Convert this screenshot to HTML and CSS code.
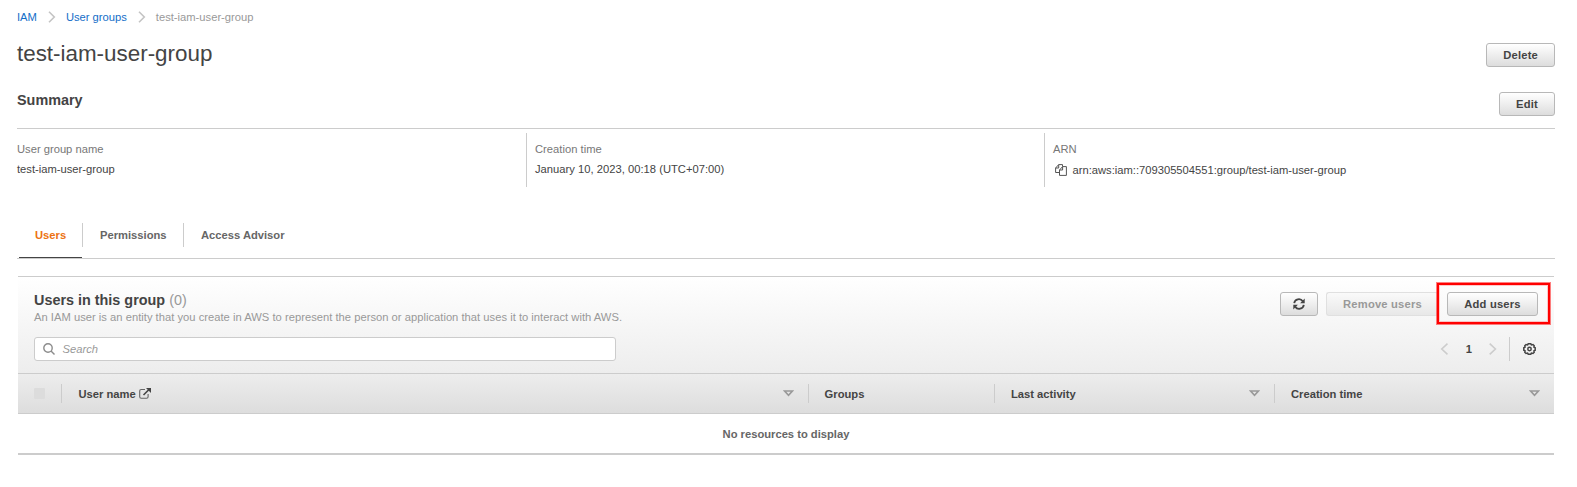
FILE: index.html
```html
<!DOCTYPE html>
<html lang="en">
<head>
<meta charset="utf-8">
<title>test-iam-user-group</title>
<link rel="stylesheet" href="styles.css">
</head>
<body>
<main class="page">
  <nav class="breadcrumbs">
    <a class="crumb crumb-first">IAM</a>
    <svg class="crumb-sep" width="8" height="12" viewBox="0 0 8 12"><path d="M1 .7 6.300 6 1 11.300"/></svg>
    <a class="crumb">User groups</a>
    <svg class="crumb-sep" width="8" height="12" viewBox="0 0 8 12"><path d="M1 .7 6.300 6 1 11.300"/></svg>
    <span class="crumb-current">test-iam-user-group</span>
  </nav>

  <header class="title-row">
    <h1 class="title">test-iam-user-group</h1>
    <button class="btn">Delete</button>
  </header>

  <section class="summary">
    <div class="summary-head">
      <h2 class="heading">Summary</h2>
      <button class="btn">Edit</button>
    </div>
    <div class="summary-grid">
      <div class="field"><div class="label">User group name</div><div class="value">test-iam-user-group</div></div>
      <div class="field"><div class="label">Creation time</div><div class="value">January 10, 2023, 00:18 (UTC+07:00)</div></div>
      <div class="field"><div class="label">ARN</div>
        <div class="value value-arn">
          <svg class="copy-icon" width="12" height="12" viewBox="0 0 12 12"><path d="M4 8.500H.6V4L3.700.6H7.500V2.500M3.700.6V4H.6M4.500 11.400V6L7.600 2.600H11.400V11.400ZM7.600 2.600V6H4.500"/></svg>
          <span>arn:aws:iam::709305504551:group/test-iam-user-group</span>
        </div>
      </div>
    </div>
  </section>

  <nav class="tabs">
    <a class="tab tab-active"><span class="tab-text">Users</span></a>
    <a class="tab"><span class="tab-text">Permissions</span></a>
    <a class="tab"><span class="tab-text">Access Advisor</span></a>
  </nav>

  <section class="panel">
    <div class="panel-head">
      <div class="panel-left">
        <h2 class="heading">Users in this group <span class="count">(0)</span></h2>
        <p class="desc">An IAM user is an entity that you create in AWS to represent the person or application that uses it to interact with AWS.</p>
        <div class="search">
          <svg width="12" height="12" viewBox="0 0 12 12"><circle cx="5" cy="5" r="4.200"/><path d="M8 8 11.500 11.500"/></svg>
          <span>Search</span>
        </div>
      </div>
      <div class="panel-right">
        <div class="actions">
          <button class="btn btn-refresh"><svg width="12" height="12" viewBox="0 0 12 12"><path d="M1.200 5.200A4.700 4.700 0 0 1 9.800 3.300M10.800 6.800A4.700 4.700 0 0 1 2.200 8.700"/><path class="solid" d="M11.700.6V5.200H7.100ZM.3 11.400V6.800H4.900Z"/></svg></button>
          <button class="btn btn-disabled">Remove users</button>
          <div class="highlight"><button class="btn">Add users</button></div>
        </div>
        <div class="pager">
          <svg class="arrow" width="8" height="12" viewBox="0 0 8 12"><path d="M7.500 .7 1.800 6 7.500 11.300"/></svg>
          <span class="page-number">1</span>
          <svg class="arrow" width="8" height="12" viewBox="0 0 8 12"><path d="M.7 .7 6.400 6 .7 11.300"/></svg>
          <span class="settings"><svg width="13" height="12" viewBox="0 0 13 12"><path d="M5.200.8H7.800L8.400 1.900 10 1.500 11.200 2.700 10.900 4.100 12.200 4.800V7.200L10.900 7.900 11.200 9.300 10 10.500 8.400 10.100 7.800 11.200H5.200L4.600 10.100 3 10.500 1.800 9.300 2.100 7.900 .8 7.200V4.800L2.100 4.100 1.800 2.700 3 1.500 4.600 1.900Z"/><circle cx="6.500" cy="6" r="1.700"/></svg></span>
        </div>
      </div>
    </div>

    <div class="thead">
      <div class="th th-check"><span class="checkbox"></span></div>
      <div class="th th-name">User name
        <svg class="external" width="12" height="11" viewBox="0 0 12 11"><path class="frame" d="M6 1.500H2.200Q.7 1.500.7 3V8.800Q.7 10.300 2.200 10.300H7.600Q9.100 10.300 9.100 8.800V6"/><path class="shaft" d="M4.500 7 10 1.500"/><path class="tip" d="M7 0H12V5Z"/></svg>
        <svg class="sort" width="11" height="7" viewBox="0 0 11 7"><path d="M1.600 1H9.400L5.500 5.300Z"/></svg>
      </div>
      <div class="th th-groups">Groups</div>
      <div class="th">Last activity<svg class="sort" width="11" height="7" viewBox="0 0 11 7"><path d="M1.600 1H9.400L5.500 5.300Z"/></svg></div>
      <div class="th">Creation time<svg class="sort" width="11" height="7" viewBox="0 0 11 7"><path d="M1.600 1H9.400L5.500 5.300Z"/></svg></div>
    </div>
    <div class="empty">No resources to display</div>
  </section>
</main>
</body>
</html>
```
FILE: styles.css
```css
* { box-sizing: border-box; }
body {
  margin: 0;
  background: #fff;
  color: #444;
  font: 11.200px/16px "Liberation Sans", Arial, sans-serif;
}
svg { display: block; flex: none; fill: none; }
h1, h2, p { margin: 0; }
.page { padding: 9px 22px 0 17px; }

.breadcrumbs { display: flex; align-items: center; height: 16px; }
.crumb { color: #146ec8; }
.crumb-sep { margin: 0 10px 0 11px; stroke: #c4c4c4; stroke-width: 1.600; }
.crumb-current { color: #999; }

.title-row { display: flex; justify-content: space-between; align-items: flex-start; height: 49px; margin-top: 18px; }
.title { font-size: 22.400px; line-height: 22px; font-weight: 400; }

.btn {
  height: 24px;
  padding: 0 16px;
  border: 1px solid #b8b8b8;
  border-radius: 3px;
  background: linear-gradient(#fff, #ddd);
  color: #444;
  font: bold 11.200px/16px "Liberation Sans", Arial, sans-serif;
  letter-spacing: .2px;
  white-space: nowrap;
}
.heading { font-size: 14.400px; line-height: 18px; font-weight: 700; }

.summary-head { display: flex; justify-content: space-between; height: 37px; border-bottom: 1px solid #ccc; }
.summary-head .heading { line-height: 17px; }
.summary-grid { display: grid; grid-template-columns: 510px 518px 1fr; height: 54px; margin-top: 4px; }
.field { padding: 8px 0 0 8px; border-right: 1px solid #ccc; }
.field:first-child { padding-left: 0; }
.field:nth-child(2) { letter-spacing: .015px; }
.field:last-child { border: 0; }
.label { height: 20px; color: #777; }
.value-arn { display: flex; align-items: center; margin-top: 1px; }
.copy-icon { margin: -1px 6px 0 1.500px; stroke: #555; stroke-width: 1; }

.tabs { display: flex; height: 37px; margin-top: 35px; border-bottom: 1px solid #ccc; }
.tab { height: 36px; padding-top: 1px; color: #666; font-weight: 700; }
.tab-text { display: block; height: 24px; padding: 0 16px 0 17px; border-right: 1px solid #ccc; line-height: 24px; }
.tab:last-child .tab-text { border: 0; }
.tab-active { width: 64px; margin-left: 2px; background: linear-gradient(#444, #444) 0 100% / 63px 1px no-repeat; color: #ec7211; }
.tab-active .tab-text { padding-left: 16px; }
.tab:nth-child(2) { width: 101px; }

.panel { margin: 17px 1px 0; border-top: 1px solid #ccc; border-bottom: 2px solid #ccc; }
.panel-head { display: flex; justify-content: space-between; height: 96px; padding: 0 16px; background: linear-gradient(#fff, #ededed); }
.panel-left { padding-top: 14px; }
.count { color: #999; font-weight: 400; }
.desc { height: 28px; color: #999; letter-spacing: .015px; }
.search { display: flex; align-items: center; width: 582px; height: 24px; padding-left: 8px; gap: 7.500px; border: 1px solid #ccc; border-radius: 3px; background: #fff; color: #999; font-style: italic; }
.search svg { stroke: #8c8c8c; stroke-width: 1.400; }

.panel-right { display: flex; flex-direction: column; align-items: flex-end; }
.actions { display: flex; margin: 5px -13px 0 0; }
.btn-refresh { width: 38px; margin: 10px 8px 0 0; padding: 0 12px; }
.btn-refresh svg { stroke: #444; stroke-width: 1.800; }
.btn-refresh .solid { fill: #444; stroke: none; }
.btn-disabled { width: 112px; margin: 10px -2px 0 0; border-color: #e0e0e0; border-right: 0; background: linear-gradient(#fafafa, #e8e8e8); color: #999; }
.highlight { position: relative; height: 43px; padding: 9px 12px 0 10px; border: 1px solid rgba(255, 0, 0, .5); box-shadow: inset 0 0 0 2px #f00, inset 0 0 0 3px rgba(255, 0, 0, .2); }
.highlight .btn { display: block; width: 91px; padding: 0; }

.pager { display: flex; align-items: center; height: 24px; margin: 12px 2px 0 0; font-weight: 700; }
.arrow { stroke: #ccc; stroke-width: 1.600; }
.page-number { margin: 0 17px 0 17px; padding-left: 1px; }
.settings { display: flex; align-items: center; height: 24px; margin-left: 12px; padding-left: 13px; border-left: 1px solid #ccc; }
.settings svg { stroke: #444; stroke-width: 1.500; }

.thead { display: grid; grid-template-columns: 44px 747px 186px 280px 1fr; align-items: center; height: 41px; border: solid #ccc; border-width: 1px 0; background: linear-gradient(#ededed, #ddd); }
.th { display: flex; align-items: center; height: 19px; padding-left: 16px; border-right: 1px solid #ccc; font-weight: 700; }
.th:last-child { border: 0; }
.th-name { padding-left: 16.400px; }
.th-groups { padding-left: 15.600px; }
.checkbox { width: 11px; height: 11px; border-radius: 1px; background: #dcdcdc; }
.external { margin-left: 3.600px; margin-top: -1px; }
.frame { stroke: #666; stroke-width: 1.100; }
.shaft { stroke: #444; stroke-width: 1.600; }
.tip { fill: #444; }
.sort { margin: -1px 14px 0 auto; stroke: #999; stroke-width: 1.600; }
.empty { height: 39px; padding-top: 12px; text-align: center; color: #666; font-weight: 700; }
```
